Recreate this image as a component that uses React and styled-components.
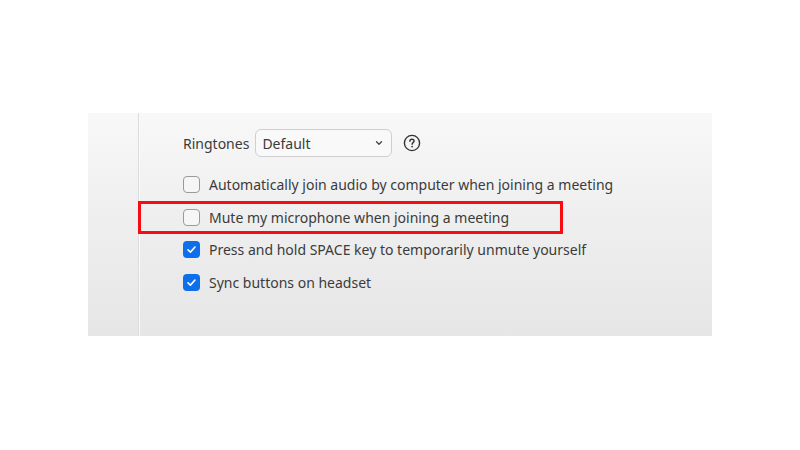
import React from "react";
import styled, { createGlobalStyle } from "styled-components";

const GlobalStyle = createGlobalStyle`
  html, body {
    margin: 0;
    padding: 0;
    background: #ffffff;
  }
  body {
    width: 800px;
    height: 450px;
    overflow: hidden;
    font-family: "Noto Sans", "Open Sans", sans-serif;
  }
`;

const Page = styled.div`
  width: 800px;
  height: 450px;
  padding: 113px 0 0 88px;
  box-sizing: border-box;
`;

const Panel = styled.div`
  width: 624px;
  height: 223px;
  display: flex;
  background: linear-gradient(to bottom, #f8f8f8 0%, #efefef 45%, #e6e6e6 100%);
`;

const Sidebar = styled.div`
  width: 50px;
  flex-shrink: 0;
  border-right: 1px solid #dcdcdc;
  box-shadow: 1px 0 0 #fafafa;
`;

const Content = styled.div`
  flex: 1;
  display: flex;
  flex-direction: column;
  padding: 16px 0 0 44px;
`;

const RingtoneRow = styled.div`
  display: flex;
  align-items: center;
  height: 28px;
  margin-bottom: 11px;
`;

const Label = styled.span`
  font-size: 14px;
  color: #3b3b3b;
  margin-right: 6px;
`;

const Select = styled.div`
  width: 137px;
  height: 28px;
  box-sizing: border-box;
  border: 1px solid #cfcfcf;
  border-radius: 6px;
  background: #f9f9f9;
  display: flex;
  align-items: center;
  justify-content: space-between;
  padding: 0 7px 0 6px;
  font-size: 14px;
  color: #3b3b3b;
`;

const Help = styled.div`
  margin-left: 11px;
  display: flex;
  align-items: center;
`;

const Row = styled.div`
  position: relative;
  display: flex;
  align-items: center;
  height: 32.7px;

  ${(p) =>
    p.$highlight &&
    `
    &::after {
      content: "";
      position: absolute;
      left: -45px;
      top: 0;
      width: 425px;
      height: 33px;
      box-sizing: border-box;
      border: 3px solid #f50d12;
    }
  `}
`;

const Box = styled.div`
  width: 17px;
  height: 17px;
  box-sizing: border-box;
  border-radius: 4px;
  margin-right: 9px;
  display: flex;
  align-items: center;
  justify-content: center;
  border: ${(p) => (p.$checked ? "none" : "1.5px solid #9a9a9a")};
  background: ${(p) => (p.$checked ? "#0e6fea" : "#f6f6f6")};
`;

const RowText = styled.span`
  font-size: 14px;
  color: #3b3b3b;
`;

const Chevron = () => (
  <svg width="10" height="10" viewBox="0 0 10 10">
    <path d="M2.5 3.8 L5 6.2 L7.5 3.8" fill="none" stroke="#444" strokeWidth="1.3" strokeLinecap="round" strokeLinejoin="round" />
  </svg>
);

const HelpIcon = () => (
  <svg width="18" height="18" viewBox="0 0 18 18">
    <circle cx="9" cy="9" r="7.6" fill="none" stroke="#333" strokeWidth="1.4" />
    <path d="M6.9 7.2 C6.9 5.9 7.9 5.2 9 5.2 C10.2 5.2 11.1 6 11.1 7.1 C11.1 8.3 9.1 8.6 9.1 10.2" fill="none" stroke="#333" strokeWidth="1.4" strokeLinecap="round" />
    <circle cx="9.1" cy="12.6" r="0.9" fill="#333" />
  </svg>
);

const Check = () => (
  <svg width="11" height="11" viewBox="0 0 11 11">
    <path d="M2 5.8 L4.4 8.1 L9 3" fill="none" stroke="#fff" strokeWidth="1.6" strokeLinecap="round" strokeLinejoin="round" />
  </svg>
);

const options = [
  { text: "Automatically join audio by computer when joining a meeting", checked: false },
  { text: "Mute my microphone when joining a meeting", checked: false, highlight: true },
  { text: "Press and hold SPACE key to temporarily unmute yourself", checked: true },
  { text: "Sync buttons on headset", checked: true },
];

export default function App() {
  return (
    <>
      <GlobalStyle />
      <Page>
        <Panel>
          <Sidebar />
          <Content>
            <RingtoneRow>
              <Label>Ringtones</Label>
              <Select>
                <span>Default</span>
                <Chevron />
              </Select>
              <Help>
                <HelpIcon />
              </Help>
            </RingtoneRow>
            {options.map((o) => (
              <Row key={o.text} $highlight={o.highlight}>
                <Box $checked={o.checked}>{o.checked && <Check />}</Box>
                <RowText>{o.text}</RowText>
              </Row>
            ))}
          </Content>
        </Panel>
      </Page>
    </>
  );
}
